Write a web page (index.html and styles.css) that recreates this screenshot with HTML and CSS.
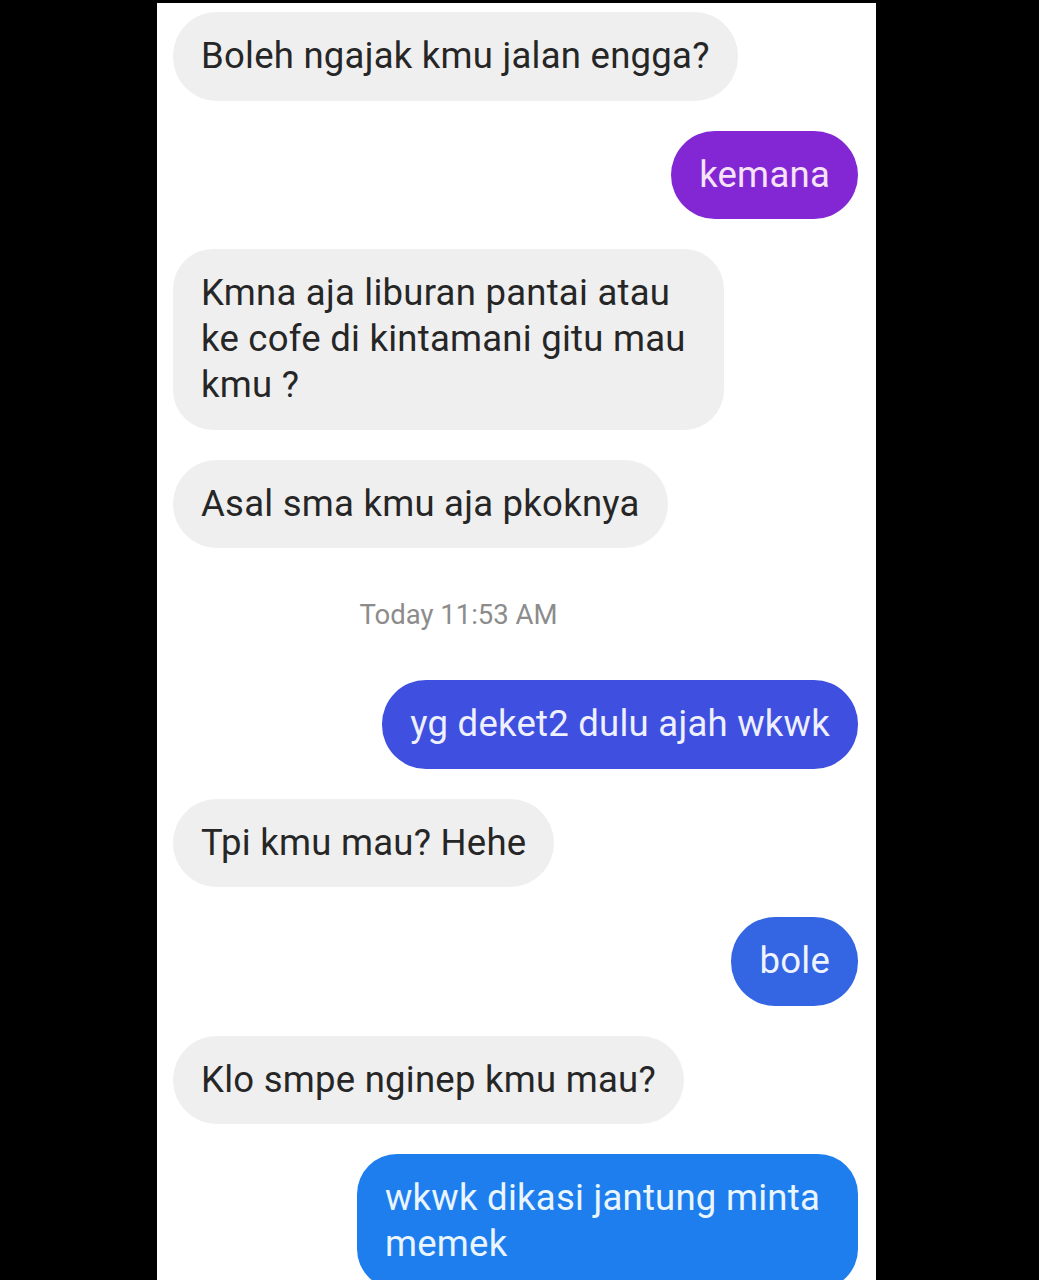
FILE: index.html
```html
<!DOCTYPE html>
<html>
<head>
<meta charset="utf-8">
<link rel="stylesheet" href="styles.css">
</head>
<body>
<div class="screen">
  <div class="chat">
    <div class="row in"><div class="bubble gray">Boleh ngajak kmu jalan engga?</div></div>
    <div class="row out"><div class="bubble purple">kemana</div></div>
    <div class="row in"><div class="bubble gray multi">Kmna aja liburan pantai atau<br>ke cofe di kintamani gitu mau<br>kmu ?</div></div>
    <div class="row in"><div class="bubble gray">Asal sma kmu aja pkoknya</div></div>
    <div class="stamp">Today 11:53 AM</div>
    <div class="row out"><div class="bubble indigo">yg deket2 dulu ajah wkwk</div></div>
    <div class="row in"><div class="bubble gray">Tpi kmu mau? Hehe</div></div>
    <div class="row out"><div class="bubble blue">bole</div></div>
    <div class="row in"><div class="bubble gray">Klo smpe nginep kmu mau?</div></div>
    <div class="row out"><div class="bubble sky multi">wkwk dikasi jantung minta<br>memek</div></div>
  </div>
</div>
</body>
</html>
```

FILE: styles.css
```css
html, body {
  margin: 0;
  padding: 0;
  background: #000;
  height: 1280px;
  overflow: hidden;
}
.screen {
  margin: 3px 0 0 157px;
  width: 719px;
  height: 1277px;
  background: #fff;
  overflow: hidden;
}
.chat {
  display: flex;
  flex-direction: column;
  padding: 9px 18px 0 16px;
  font-family: Roboto, "Liberation Sans", sans-serif;
}
.row {
  display: flex;
  margin-bottom: 30px;
}
.row.in { justify-content: flex-start; }
.row.out { justify-content: flex-end; }
.bubble {
  font-size: 36.5px;
  line-height: 46px;
  padding: 21px 28px 21.5px;
  border-radius: 44px;
  color: #262626;
  letter-spacing: 0.25px;
  white-space: nowrap;
}
.bubble.multi {
  padding-right: 38px;
  border-radius: 40px;
}
.gray { background: #efefef; }
.purple { background: #8327d4; color: #f6e3f7; }
.indigo { background: #3f4fdf; color: #eef0ff; }
.blue { background: #3465e2; color: #eef4ff; }
.sky { background: #1f7eee; color: #eaf6ff; }
.stamp {
  text-align: center;
  font-size: 27.5px;
  line-height: 34px;
  color: #8c8c8c;
  margin: 20px 114px 48px 0;
}
```
